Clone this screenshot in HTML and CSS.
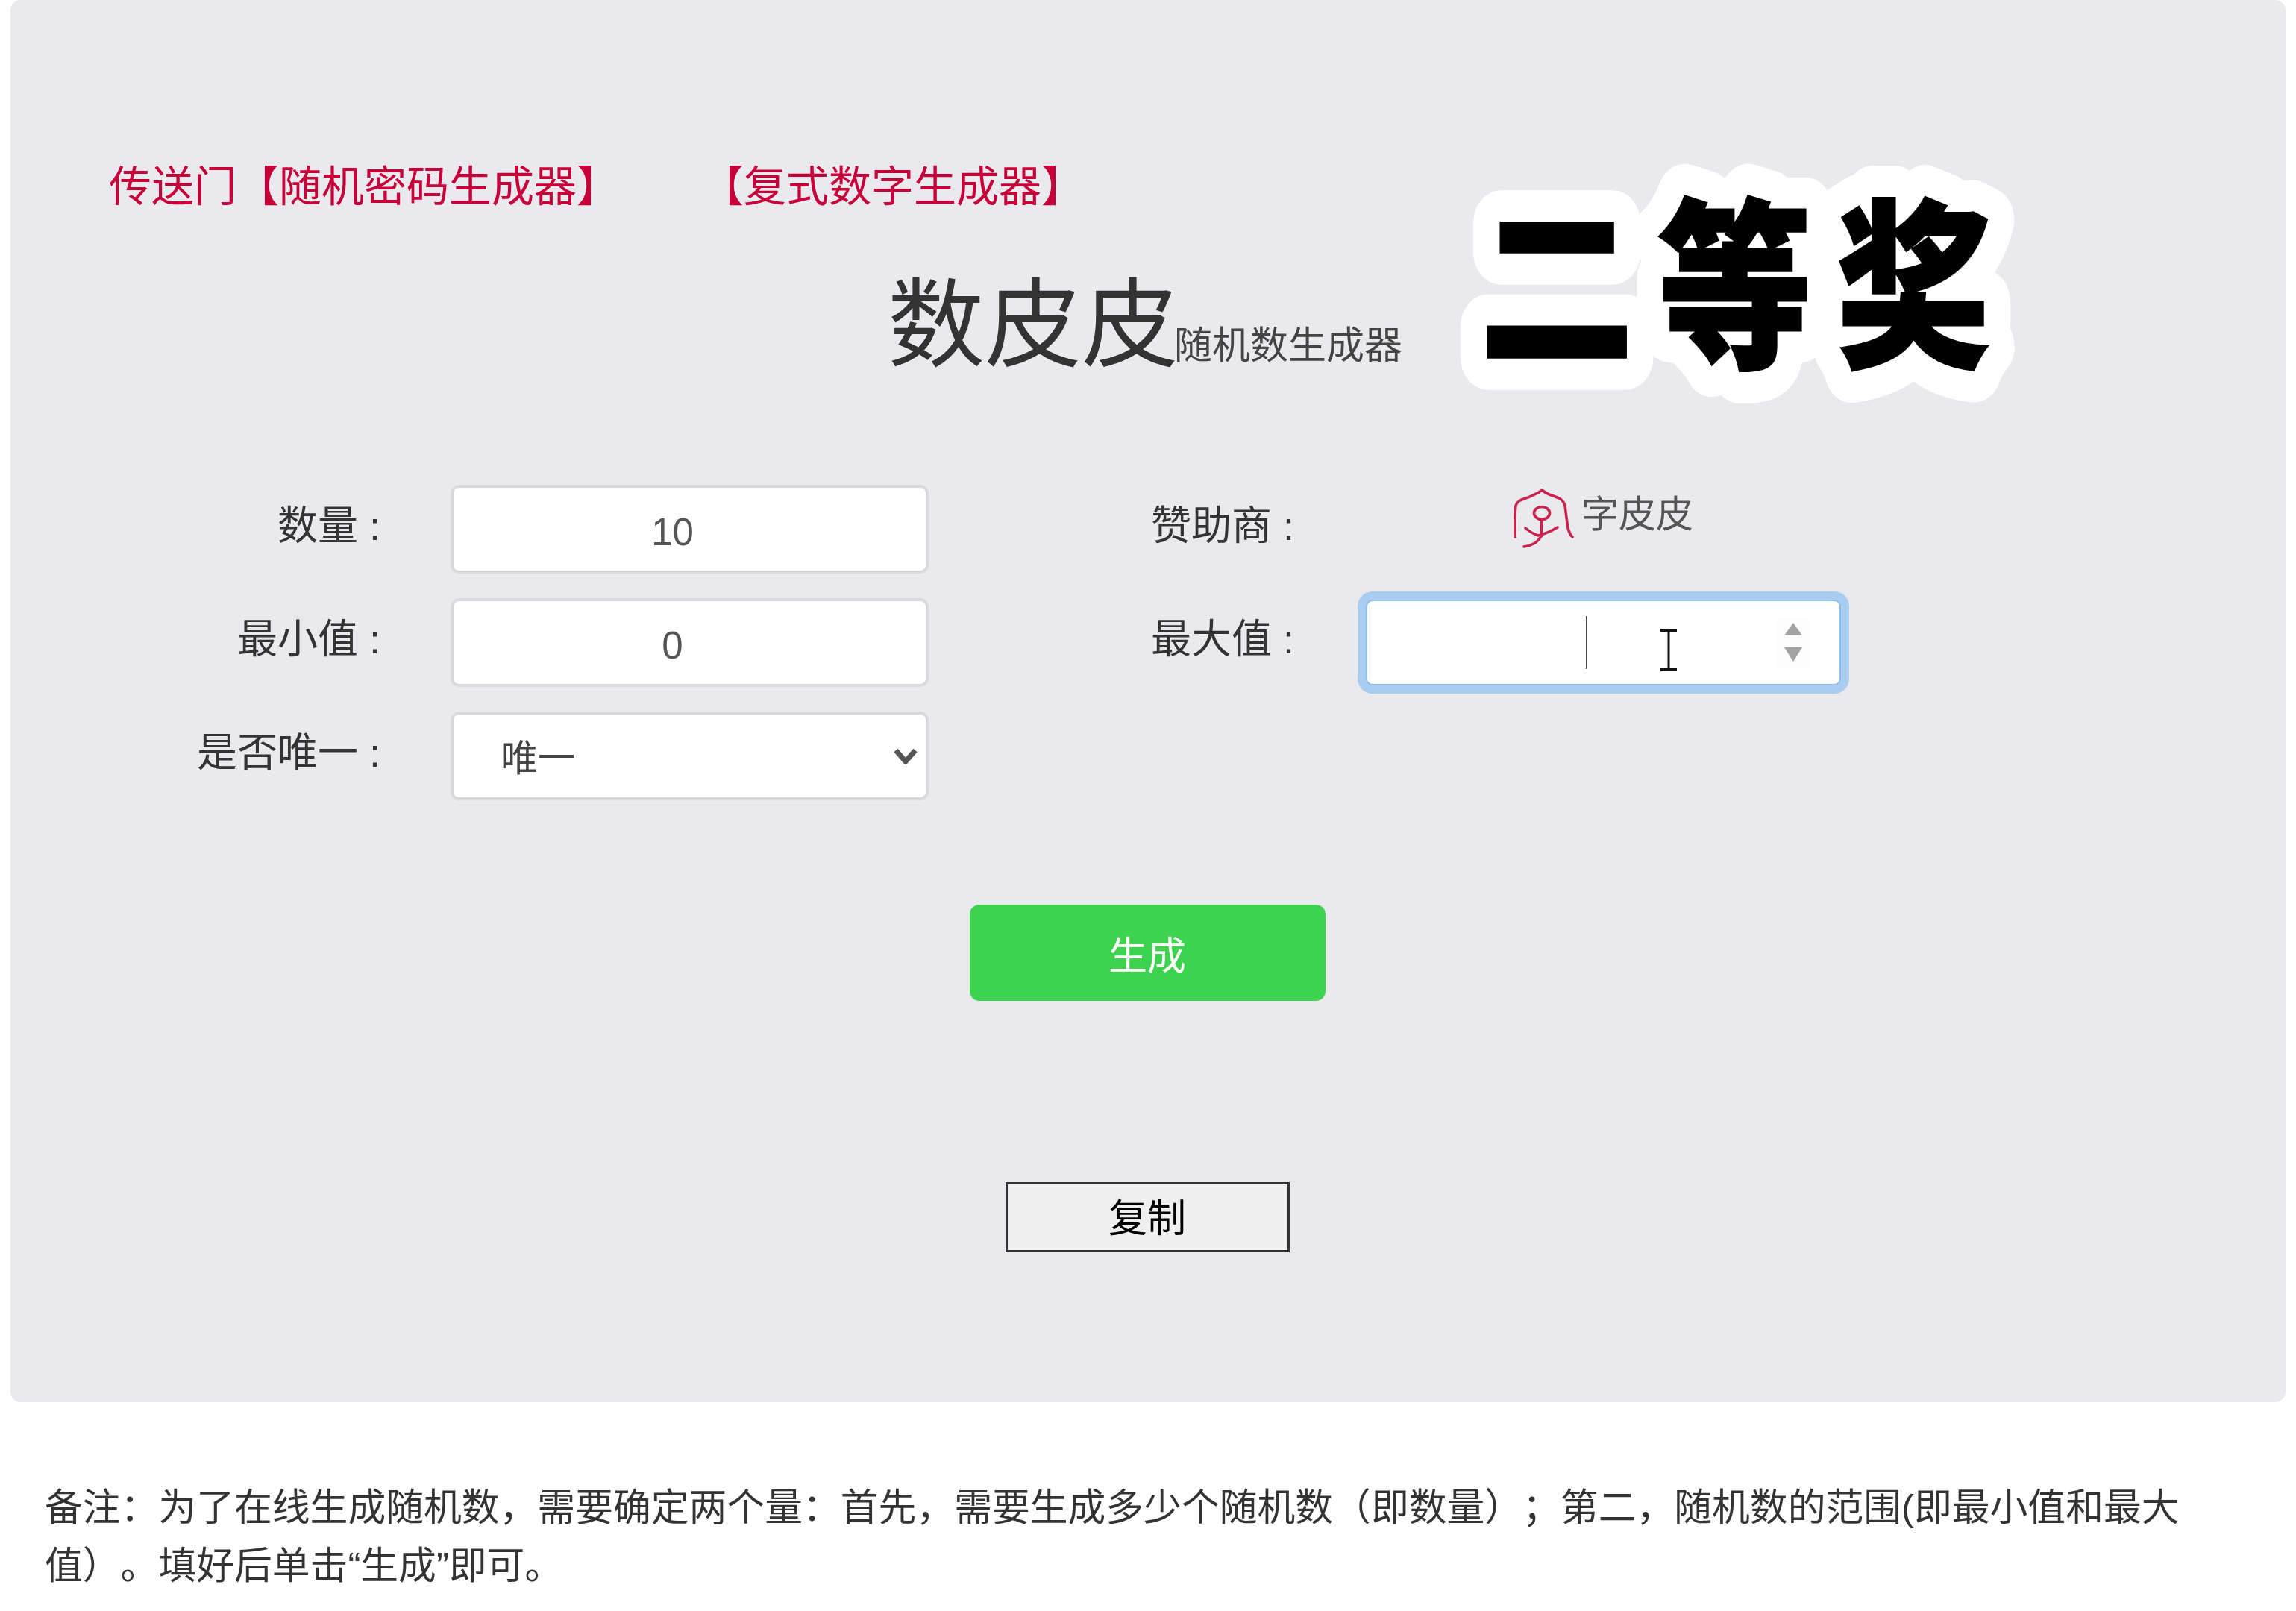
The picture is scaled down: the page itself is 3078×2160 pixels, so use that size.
FILE: index.html
```html
<!DOCTYPE html>
<html lang="zh-CN">
<head>
<meta charset="utf-8">
<title>数皮皮 随机数生成器</title>
<link rel="stylesheet" href="styles.css">
</head>
<body>
<main class="panel">
  <nav class="links">
    <a class="link" href="#">传送门【随机密码生成器】</a>
    <a class="link" href="#">【复式数字生成器】</a>
  </nav>
  <h1 class="title"><span class="title-main">数皮皮</span><span class="title-sub">随机数生成器</span></h1>
  <svg class="sticker" viewBox="0 0 800 360" aria-label="二等奖">
    <defs><text id="prize" class="prize-text" x="34" y="232" transform="scale(1 1.18)">二等奖</text></defs>
    <use href="#prize" class="prize-halo"></use>
    <use href="#prize" class="prize-ink"></use>
  </svg>
  <form class="form">
    <label class="label">数量 :</label>
    <input class="field field-number" type="text" value="10">
    <span class="label">赞助商 :</span>
    <div class="sponsor">
      <svg class="sponsor-logo" viewBox="14 10 82 82">
        <g fill="none" stroke="#c9234e" stroke-width="3.6" stroke-linecap="round" stroke-linejoin="round">
          <path d="M16 75 Q15 48 17 33 Q19 27 25 25 Q35 22 42 18 Q48 16 52 12 Q57 16 62 18 Q70 21 75 23 Q81 26 83 33 Q85 50 87 63 Q89 71 93 75"/>
          <ellipse cx="52" cy="43" rx="10.5" ry="8.5"/>
          <path d="M52 52 L51 72"/>
          <path d="M30 63 Q38 70 47 73 Q60 70 73 62"/>
          <path d="M52 73 Q46 81 43 83 Q36 87 28 88"/>
        </g>
      </svg>
      <span class="sponsor-name">字皮皮</span>
    </div>

    <label class="label">最小值 :</label>
    <input class="field field-number" type="text" value="0">
    <label class="label">最大值 :</label>
    <div class="focus-field">
      <input class="field field-focus" type="text">
      <span class="caret"></span>
      <svg class="ibeam" viewBox="0 0 24 57">
        <path d="M1 2 H23 M1 55 H23" stroke="#111" stroke-width="4" fill="none"/>
        <path d="M12 2 V55" stroke="#111" stroke-width="3" fill="none"/>
      </svg>
      <svg class="spinner" viewBox="0 0 48 67">
        <path d="M24 7 L36 24 H12 Z M12 40 H36 L24 59 Z" fill="#a3a3a3"/>
      </svg>
    </div>

    <label class="label">是否唯一 :</label>
    <div class="select-wrap">
      <select class="field field-select"><option>唯一</option><option>不唯一</option></select>
      <svg class="chevron" viewBox="0 0 32 22">
        <path d="M3 3 L16 18 L29 3" fill="none" stroke="#555" stroke-width="7"/>
      </svg>
    </div>
  </form>
  <div class="action action-generate"><button class="btn-generate" type="button">生成</button></div>
  <div class="action action-copy"><button class="btn-copy" type="button">复制</button></div>
</main>
<p class="note">备注：为了在线生成随机数，需要确定两个量：首先，需要生成多少个随机数（即数量）；第二，随机数的范围(即最小值和最大值）。填好后单击“生成”即可。</p>
</body>
</html>
```
FILE: styles.css
```css
* { box-sizing: border-box; }
html, body { margin: 0; padding: 0; background: #fff; }
body {
  font-family: "Liberation Sans", "Noto Sans CJK SC", sans-serif;
  color: #333;
  width: 3078px;
  height: 2160px;
  overflow: hidden;
  text-spacing-trim: space-all;
}
.panel {
  position: relative;
  width: 3050px;
  margin-left: 14px;
  padding: 212px 0 201px;
  background: #e9e9ee;
  border-radius: 14px;
}
.links {
  display: flex;
  gap: 110px;
  padding-left: 132px;
  font-size: 57px;
  line-height: 76px;
}
.link { color: #c70039; text-decoration: none; }
.title {
  display: flex;
  justify-content: center;
  align-items: baseline;
  margin: 68px 0 0;
  padding-right: 8px;
  font-weight: 400;
  height: 160px;
  line-height: 160px;
}
.title-main { font-size: 130px; color: #333; }
.title-sub { font-size: 51px; color: #444; margin-left: -6px; }
.sticker {
  position: absolute;
  left: 1936px;
  top: 200px;
  width: 800px;
  height: 360px;
}
.prize-text {
  font-family: "Noto Sans CJK SC", sans-serif;
  font-size: 206px;
  font-weight: 900;
  letter-spacing: 33px;
}
.prize-halo {
  fill: #fff;
  stroke: #fff;
  stroke-width: 74px;
  stroke-linejoin: round;
}
.prize-ink {
  fill: #000;
  stroke: #000;
  stroke-width: 3px;
}
.form {
  display: grid;
  grid-template-columns: 496px 637px 396px 637px;
  grid-auto-rows: 115px;
  column-gap: 96px;
  row-gap: 37px;
  margin-top: 136px;
}
.label {
  align-self: center;
  padding-bottom: 10px;
  text-align: right;
  font-size: 54px;
  line-height: 76px;
  color: #333;
}
.field {
  display: block;
  width: 100%;
  height: 115px;
  margin: 0;
  background: #fff;
  border: 2px solid #d6d6db;
  border-radius: 9px;
  box-shadow: 0 0 0 2px #dbdbe0;
  outline: none;
  font-family: "Liberation Sans", "Noto Sans CJK SC", sans-serif;
  font-size: 51px;
  color: #555;
}
.field-number {
  padding: 8px 46px 0 0;
  text-align: center;
}
.field-select {
  appearance: none;
  -webkit-appearance: none;
  padding: 6px 0 0 63px;
  font-size: 50px;
  color: #444;
}
.select-wrap, .focus-field { position: relative; }
.chevron {
  position: absolute;
  left: 592px;
  top: 47px;
  width: 32px;
  height: 22px;
}
.focus-field .field-focus {
  border: 2px solid #8fbdec;
  box-shadow: 0 0 0 11px #a9cdf1;
}
.caret {
  position: absolute;
  left: 295px;
  top: 22px;
  width: 2px;
  height: 71px;
  background: #444;
}
.ibeam {
  position: absolute;
  left: 394px;
  top: 39px;
  width: 24px;
  height: 57px;
}
.spinner {
  position: absolute;
  left: 549px;
  top: 24px;
  width: 48px;
  height: 67px;
  background: #fdfdfd;
}
.sponsor {
  display: flex;
  align-items: flex-start;
  gap: 9px;
  padding-left: 198px;
}
.sponsor-logo { width: 82px; height: 82px; margin-top: 3px; flex: none; }
.sponsor-name { font-size: 50px; line-height: 76px; color: #555; }
.action { display: flex; justify-content: center; padding-right: 2px; }
.action-generate { margin-top: 142px; }
.action-copy { margin-top: 243px; }
.btn-generate {
  width: 477px;
  height: 129px;
  padding: 0;
  background: #3dd34e;
  border: 0;
  border-radius: 13px;
  color: #fff;
  font-family: inherit;
  font-size: 52px;
}
.btn-copy {
  width: 381px;
  height: 94px;
  padding: 0 0 6px;
  background: #efefef;
  border: 3px solid #333;
  color: #000;
  font-family: inherit;
  font-size: 52px;
}
.note {
  width: 2950px;
  margin: 103px 0 0 60px;
  font-size: 50.8px;
  line-height: 78px;
  color: #333;
}
```
